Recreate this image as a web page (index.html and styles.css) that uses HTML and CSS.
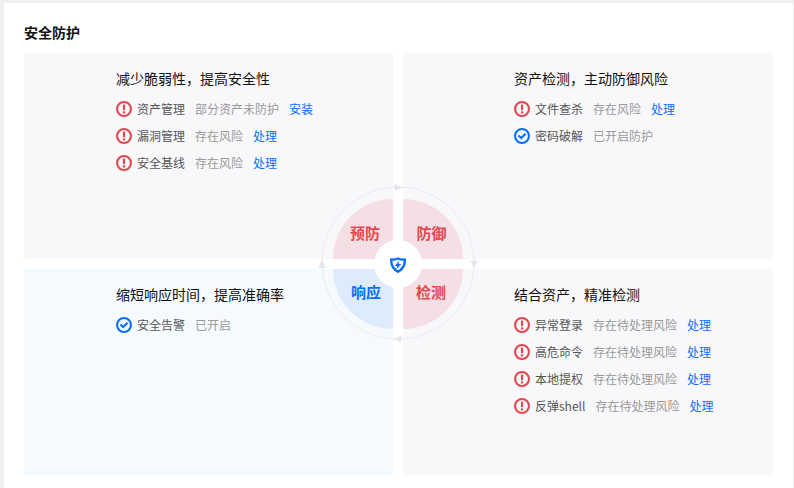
FILE: index.html
```html
<!DOCTYPE html>
<html lang="zh-CN">
<head>
<meta charset="utf-8">
<title>安全防护</title>
<link rel="stylesheet" href="styles.css">
</head>
<body>
<svg class="defs" width="0" height="0" aria-hidden="true">
  <symbol id="warn" viewBox="0 0 16 16">
    <circle cx="8" cy="8" r="6.950" fill="none" stroke="#e5474f" stroke-width="2.100"/>
    <rect x="6.900" y="3.500" width="2.200" height="5.700" rx=".6" fill="#e5474f"/>
    <rect x="6.900" y="10.200" width="2.200" height="2.200" rx=".5" fill="#e5474f"/>
  </symbol>
  <symbol id="ok" viewBox="0 0 16 16">
    <circle cx="8" cy="8" r="6.950" fill="none" stroke="#0a6eff" stroke-width="2.100"/>
    <path d="M4.500 7.400 7.200 10.100 11.600 5.800" fill="none" stroke="#0a6eff" stroke-width="2.100"/>
  </symbol>
</svg>
<main class="card">
  <h1 class="heading">安全防护</h1>
  <div class="board">
    <section class="panel">
      <h2 class="panel-title">减少脆弱性，提高安全性</h2>
      <div class="row"><svg class="icon"><use href="#warn"/></svg><span class="name">资产管理</span><span class="status">部分资产未防护</span><a class="link">安装</a></div>
      <div class="row"><svg class="icon"><use href="#warn"/></svg><span class="name">漏洞管理</span><span class="status">存在风险</span><a class="link">处理</a></div>
      <div class="row"><svg class="icon"><use href="#warn"/></svg><span class="name">安全基线</span><span class="status">存在风险</span><a class="link">处理</a></div>
    </section>
    <section class="panel panel-right">
      <h2 class="panel-title">资产检测，主动防御风险</h2>
      <div class="row"><svg class="icon"><use href="#warn"/></svg><span class="name">文件查杀</span><span class="status">存在风险</span><a class="link">处理</a></div>
      <div class="row"><svg class="icon"><use href="#ok"/></svg><span class="name">密码破解</span><span class="status">已开启防护</span></div>
    </section>
    <section class="panel panel-blue">
      <h2 class="panel-title">缩短响应时间，提高准确率</h2>
      <div class="row"><svg class="icon"><use href="#ok"/></svg><span class="name">安全告警</span><span class="status">已开启</span></div>
    </section>
    <section class="panel panel-right">
      <h2 class="panel-title">结合资产，精准检测</h2>
      <div class="row"><svg class="icon"><use href="#warn"/></svg><span class="name">异常登录</span><span class="status">存在待处理风险</span><a class="link">处理</a></div>
      <div class="row"><svg class="icon"><use href="#warn"/></svg><span class="name">高危命令</span><span class="status">存在待处理风险</span><a class="link">处理</a></div>
      <div class="row"><svg class="icon"><use href="#warn"/></svg><span class="name">本地提权</span><span class="status">存在待处理风险</span><a class="link">处理</a></div>
      <div class="row"><svg class="icon"><use href="#warn"/></svg><span class="name">反弹shell</span><span class="status">存在待处理风险</span><a class="link">处理</a></div>
    </section>
    <div class="wheel">
      <svg class="ring" width="160" height="160" viewBox="0 0 160 160" aria-hidden="true">
        <circle cx="80" cy="79" r="76" fill="none" stroke="#e9ebf0" stroke-width="1"/>
        <path d="M76.500 0 84 3.500 76.500 7Z" fill="#e3e6ed"/>
        <path d="M152.500 76.500 160 76.500 156 84Z" fill="#e3e6ed"/>
        <path d="M83.500 151.500 76 155 83.500 158.500Z" fill="#e3e6ed"/>
        <path d="M0 84 8 84 4 76.500Z" fill="#e3e6ed"/>
      </svg>
      <div class="quad quad-tl">预防</div>
      <div class="quad quad-tr">防御</div>
      <div class="quad quad-bl">响应</div>
      <div class="quad quad-br">检测</div>
      <div class="hub">
        <svg width="16" height="16" viewBox="0 0 16 16" aria-hidden="true">
          <path d="M8 1.500C10 2.500 12.400 2.900 14.800 2.500 15 7.600 12.900 11.900 8 14.800 3.100 11.900 1 7.600 1.200 2.500 3.600 2.900 6 2.500 8 1.500Z" fill="none" stroke="#0a6eff" stroke-width="2.400" stroke-linejoin="round"/>
          <path d="M9.300 3.600 4.700 8.900H7.300L6.500 12.400 11.200 7H8.500Z" fill="#0a6eff"/>
        </svg>
      </div>
    </div>
  </div>
</main>
</body>
</html>
```
FILE: styles.css
```css
* { box-sizing: border-box; }
html, body { margin: 0; height: 100%; overflow: hidden; }
body {
  background: #efefef;
  padding: 3px 1px 0 4px;
  font-family: "Noto Sans CJK SC", "Noto Sans", sans-serif;
  font-size: 12px;
  color: #666;
}
.defs { position: absolute; }
.card {
  background: #fff;
  height: 100%;
  padding: 20px 20px 0;
}
.heading {
  margin: 0 0 12px;
  font-size: 14px;
  font-weight: 700;
  line-height: 18px;
  color: #111;
}
.board {
  position: relative;
  display: grid;
  grid-template-columns: 369px 370px;
  grid-template-rows: 206px 206px;
  gap: 10px;
}
.panel {
  background: #f8f8fb;
  padding: 15px 0 0 92px;
}
.panel-right { padding-left: 111px; }
.panel-blue { background: #f5faff; }
.panel-title {
  margin: 0 0 7px;
  font-size: 14px;
  font-weight: 400;
  line-height: 20px;
  color: #111;
}
.row {
  display: flex;
  align-items: center;
  height: 27px;
  line-height: 27px;
}
.icon { width: 16px; height: 16px; margin-right: 5px; flex: none; }
.name { color: #555; margin-right: 10px; }
.status { color: #999; margin-right: 10px; }
.link { color: #0a6eff; }
.wheel {
  position: absolute;
  left: 294px;
  top: 131px;
  width: 160px;
  height: 160px;
  display: grid;
  grid-template-columns: 60px 60px;
  grid-template-rows: 60px 60px;
  gap: 10px;
  padding: 15px;
}
.ring { position: absolute; left: 0; top: 0; }
.quad {
  position: relative;
  background: #f3dfe4;
  color: #e5474f;
  font-size: 15px;
  font-weight: 700;
  line-height: 20px;
  display: flex;
  align-items: center;
  justify-content: center;
}
.quad-tl { border-radius: 60px 0 0 0; padding: 8px 0 0 4px; }
.quad-tr { border-radius: 0 60px 0 0; padding: 8px 3px 0 0; }
.quad-bl { border-radius: 0 0 0 60px; padding: 0 0 14px 6px; background: #deebfd; color: #0a6eff; }
.quad-br { border-radius: 0 0 60px 0; padding: 0 4px 14px 0; }
.hub {
  position: absolute;
  left: 56px;
  top: 56px;
  width: 48px;
  height: 48px;
  padding: 1px 1px 0 0;
  border-radius: 50%;
  background: #fff;
  display: flex;
  align-items: center;
  justify-content: center;
}
```
